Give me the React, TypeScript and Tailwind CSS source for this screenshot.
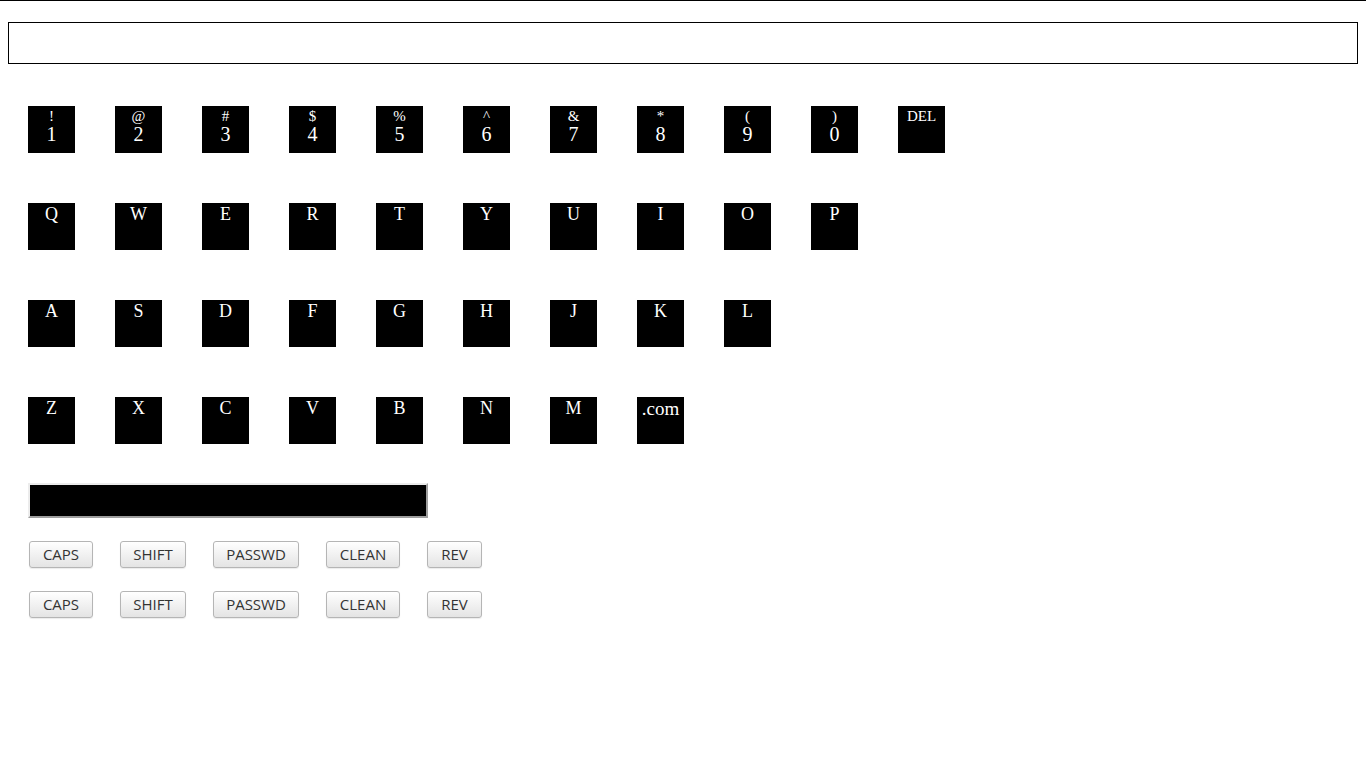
const numberKeys = [
  ["!", "1"],
  ["@", "2"],
  ["#", "3"],
  ["$", "4"],
  ["%", "5"],
  ["^", "6"],
  ["&", "7"],
  ["*", "8"],
  ["(", "9"],
  [")", "0"],
];

const letterRows = [
  ["Q", "W", "E", "R", "T", "Y", "U", "I", "O", "P"],
  ["A", "S", "D", "F", "G", "H", "J", "K", "L"],
  ["Z", "X", "C", "V", "B", "N", "M", ".com"],
];

const controls = [
  { label: "CAPS", w: "w-[64px]" },
  { label: "SHIFT", w: "w-[66px]" },
  { label: "PASSWD", w: "w-[86px]" },
  { label: "CLEAN", w: "w-[74px]" },
  { label: "REV", w: "w-[55px]" },
];

function Key({ children }: { children: React.ReactNode }) {
  return (
    <div className="w-[47px] h-[47px] bg-black text-white text-center font-['Liberation_Serif',serif] leading-none shrink-0 overflow-hidden">
      {children}
    </div>
  );
}

function ControlRow() {
  return (
    <div className="flex gap-[27px] pl-[1px]">
      {controls.map((c) => (
        <button
          key={c.label}
          className={`${c.w} h-[27px] rounded-[3px] border border-[#b5b5b5] bg-linear-to-b from-white to-[#e4e4e4] text-[15px] leading-none text-[#333] font-['Open_Sans',sans-serif] shadow-[0_1px_1px_rgba(0,0,0,0.08)]`}
        >
          {c.label}
        </button>
      ))}
    </div>
  );
}

export default function App() {
  return (
    <div className="min-h-screen bg-white border-t border-black">
      <div className="px-[8px] pt-[21px]">
        <div className="h-[42px] w-full border border-black" />
      </div>

      <div className="px-[28px] pt-[42px] flex flex-col gap-[50px]">
        <div className="flex gap-[40px]">
          {numberKeys.map(([sym, num]) => (
            <Key key={num}>
              <div className="pt-[3px] text-[15px]">{sym}</div>
              <div className="text-[20px]">{num}</div>
            </Key>
          ))}
          <Key>
            <div className="pt-[3px] text-[15px]">DEL</div>
          </Key>
        </div>

        {letterRows.map((row, i) => (
          <div key={i} className="flex gap-[40px]">
            {row.map((k) => (
              <Key key={k}>
                <div className={k === ".com" ? "pt-[2px] text-[19px]" : "pt-[2px] text-[18px]"}>{k}</div>
              </Key>
            ))}
          </div>
        ))}
      </div>

      <div className="px-[28px] pt-[39px]">
        <div className="w-[400px] h-[35px] bg-black border-2 border-t-[#ececec] border-l-[#ececec] border-b-[#9e9e9e] border-r-[#9e9e9e]" />
      </div>

      <div className="px-[28px] pt-[23px] flex flex-col gap-[23px]">
        <ControlRow />
        <ControlRow />
      </div>
    </div>
  );
}
